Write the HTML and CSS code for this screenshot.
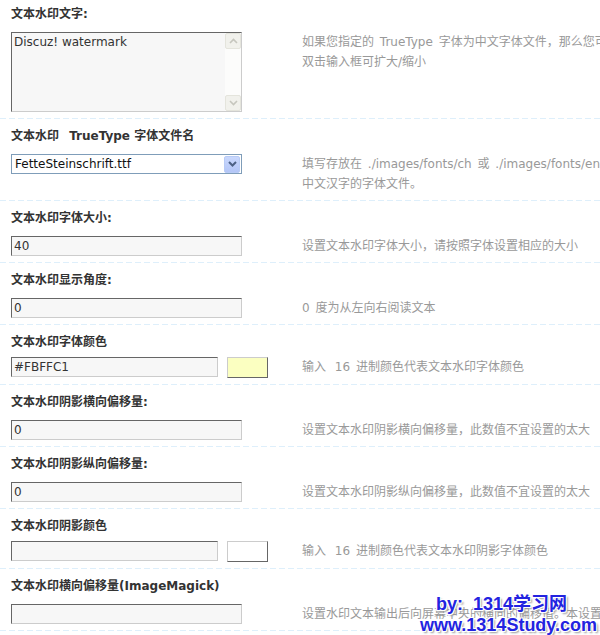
FILE: index.html
```html
<!DOCTYPE html>
<html lang="zh-CN">
<head>
<meta charset="utf-8">
<title>文本水印设置</title>
<link rel="stylesheet" href="styles.css">
</head>
<body>
<div class="settings">
  <div class="row">
    <div class="label">文本水印文字:</div>
    <div class="field">
      <div class="control">
        <div class="textarea-box">
          <textarea class="textarea">Discuz! watermark</textarea>
          <div class="vscroll">
            <span class="sb-btn"><svg width="9" height="6" viewBox="0 0 9 6"><path d="M1 5 L4.5 1.5 L8 5" fill="none" stroke="#c6c6be" stroke-width="1.6"/></svg></span>
            <span class="sb-track"></span>
            <span class="sb-btn"><svg width="9" height="6" viewBox="0 0 9 6"><path d="M1 1 L4.5 4.5 L8 1" fill="none" stroke="#c6c6be" stroke-width="1.6"/></svg></span>
          </div>
        </div>
      </div>
      <div class="tip">如果您指定的 TrueType 字体为中文字体文件，那么您可以在文本水印中使用中文<br>双击输入框可扩大/缩小</div>
    </div>
  </div>

  <div class="row">
    <div class="label">文本水印 <span class="latin">TrueType</span> 字体文件名</div>
    <div class="field">
      <div class="control">
        <div class="select">
          <span class="select-value">FetteSteinschrift.ttf</span>
          <span class="select-btn"><svg width="9" height="6" viewBox="0 0 9 6"><path d="M1 1 L4.5 4.5 L8 1" fill="none" stroke="#4d6185" stroke-width="2"/></svg></span>
        </div>
      </div>
      <div class="tip">填写存放在 ./images/fonts/ch 或 ./images/fonts/en 目录下的 TrueType 字体文件名，如需使用中文文字水印，请选择支持<br>中文汉字的字体文件。</div>
    </div>
  </div>

  <div class="row">
    <div class="label">文本水印字体大小:</div>
    <div class="field">
      <div class="control"><input class="txt" type="text" value="40"></div>
      <div class="tip">设置文本水印字体大小，请按照字体设置相应的大小</div>
    </div>
  </div>

  <div class="row">
    <div class="label">文本水印显示角度:</div>
    <div class="field">
      <div class="control"><input class="txt" type="text" value="0"></div>
      <div class="tip">0 度为从左向右阅读文本</div>
    </div>
  </div>

  <div class="row row-color">
    <div class="label">文本水印字体颜色</div>
    <div class="field">
      <div class="control color-ctl"><input class="txt txt-short" type="text" value="#FBFFC1"><span class="swatch" style="background:#FBFFC1"></span></div>
      <div class="tip">输入 <span class="num">16</span> 进制颜色代表文本水印字体颜色</div>
    </div>
  </div>

  <div class="row">
    <div class="label">文本水印阴影横向偏移量:</div>
    <div class="field">
      <div class="control"><input class="txt" type="text" value="0"></div>
      <div class="tip">设置文本水印阴影横向偏移量，此数值不宜设置的太大</div>
    </div>
  </div>

  <div class="row">
    <div class="label">文本水印阴影纵向偏移量:</div>
    <div class="field">
      <div class="control"><input class="txt" type="text" value="0"></div>
      <div class="tip">设置文本水印阴影纵向偏移量，此数值不宜设置的太大</div>
    </div>
  </div>

  <div class="row row-color">
    <div class="label">文本水印阴影颜色</div>
    <div class="field">
      <div class="control color-ctl"><input class="txt txt-short" type="text" value=""><span class="swatch" style="background:#FFFFFF"></span></div>
      <div class="tip">输入 <span class="num">16</span> 进制颜色代表文本水印阴影字体颜色</div>
    </div>
  </div>

  <div class="row">
    <div class="label">文本水印横向偏移量(ImageMagick)</div>
    <div class="field">
      <div class="control"><input class="txt" type="text" value=""></div>
      <div class="tip">设置水印文本输出后向屏幕中央的横向的偏移值。本设置只适用于 ImageMagick 图片处理库</div>
    </div>
  </div>
</div>

<div class="stamp">
  <div class="stamp-l1">by:&nbsp; 1314学习网</div>
  <div class="stamp-l2">www.1314Study.com</div>
</div>
</body>
</html>
```

FILE: styles.css
```css
html, body {
  margin: 0;
  padding: 0;
  overflow: hidden;
  background: #fff;
}

body {
  position: relative;
  width: 600px;
  height: 635px;
  font-family: "DejaVu Sans", "Noto Sans CJK SC", sans-serif;
  font-size: 12px;
  color: #333;
}

.settings {
  width: 1100px;
}

.row {
  padding: 8px 0 7px 11px;
  background: linear-gradient(to right, #deeffb 6px, transparent 6px) left bottom / 9px 1px repeat-x;
}

.row:first-child {
  padding-top: 5px;
}

.label {
  font-weight: bold;
  line-height: 18px;
  margin-bottom: 9px;
  color: #333;
  white-space: nowrap;
}

.label .latin {
  margin-left: 6px;
}

.row-color .label {
  margin-bottom: 6px;
}

.field {
  display: grid;
  grid-template-columns: 291px auto;
  align-items: start;
}

.control {
  display: flex;
  align-items: flex-start;
}

.tip {
  color: #999;
  line-height: 20px;
  white-space: nowrap;
  word-spacing: 2px;
}

.tip .num {
  margin-left: 3px;
}

/* text inputs */
.txt {
  box-sizing: border-box;
  width: 231px;
  height: 20px;
  margin: 0;
  padding: 0 2px;
  border: 1px solid #ccc;
  border-color: #666 #ccc #ccc #666;
  background: #f7f7f7;
  color: #333;
  font-family: "DejaVu Sans", "Noto Sans CJK SC", sans-serif;
  font-size: 12px;
  outline: none;
}

.txt-short {
  width: 207px;
}

.swatch {
  display: block;
  box-sizing: border-box;
  width: 41px;
  height: 21px;
  margin-left: 9px;
  border: 1px solid #666;
  border-color: #ccc #666 #666 #ccc;
}

/* textarea with XP-like scrollbar */
.textarea-box {
  box-sizing: border-box;
  display: flex;
  width: 231px;
  height: 80px;
  border: 1px solid #ccc;
  border-color: #666 #ccc #ccc #666;
  background: #f7f7f7;
}

.textarea {
  flex: 1;
  min-width: 0;
  margin: 0;
  padding: 2px 2px;
  border: none;
  background: transparent;
  resize: none;
  overflow: hidden;
  color: #333;
  font-family: "DejaVu Sans", "Noto Sans CJK SC", sans-serif;
  font-size: 12px;
  line-height: 15px;
  outline: none;
}

.vscroll {
  width: 16px;
  display: flex;
  flex-direction: column;
  background: #fcfcfb;
}

.sb-btn {
  box-sizing: border-box;
  height: 16px;
  display: flex;
  align-items: center;
  justify-content: center;
  border: 1px solid #e4e4dc;
  border-radius: 2px;
  background: #f1f1ec;
}

.sb-track {
  flex: 1;
}

/* select */
.select {
  box-sizing: border-box;
  display: flex;
  align-items: center;
  width: 231px;
  height: 20px;
  border: 1px solid #7f9db9;
  background: #fff;
  padding: 0 0 0 3px;
}

.select-value {
  flex: 1;
  color: #111;
  white-space: nowrap;
}

.select-btn {
  box-sizing: border-box;
  width: 16px;
  height: 17px;
  margin-right: 1px;
  display: flex;
  align-items: center;
  justify-content: center;
  border: 1px solid #b8cbf6;
  border-radius: 2px;
  background: linear-gradient(#cad8fd, #b3c6f7);
}

/* overlay stamp */
.stamp {
  position: absolute;
  left: 420px;
  top: 594px;
  font-family: "Liberation Sans", "Noto Sans CJK SC", sans-serif;
  font-weight: bold;
  font-size: 18px;
  line-height: 21px;
  color: #2323e0;
  white-space: nowrap;
  text-shadow: -1px -1px 0 #fff, 1px -1px 0 #fff, -1px 1px 0 #fff, 1px 1px 0 #fff, 2px 2px 2px #999;
}

.stamp-l1 {
  padding-left: 16px;
}
```
